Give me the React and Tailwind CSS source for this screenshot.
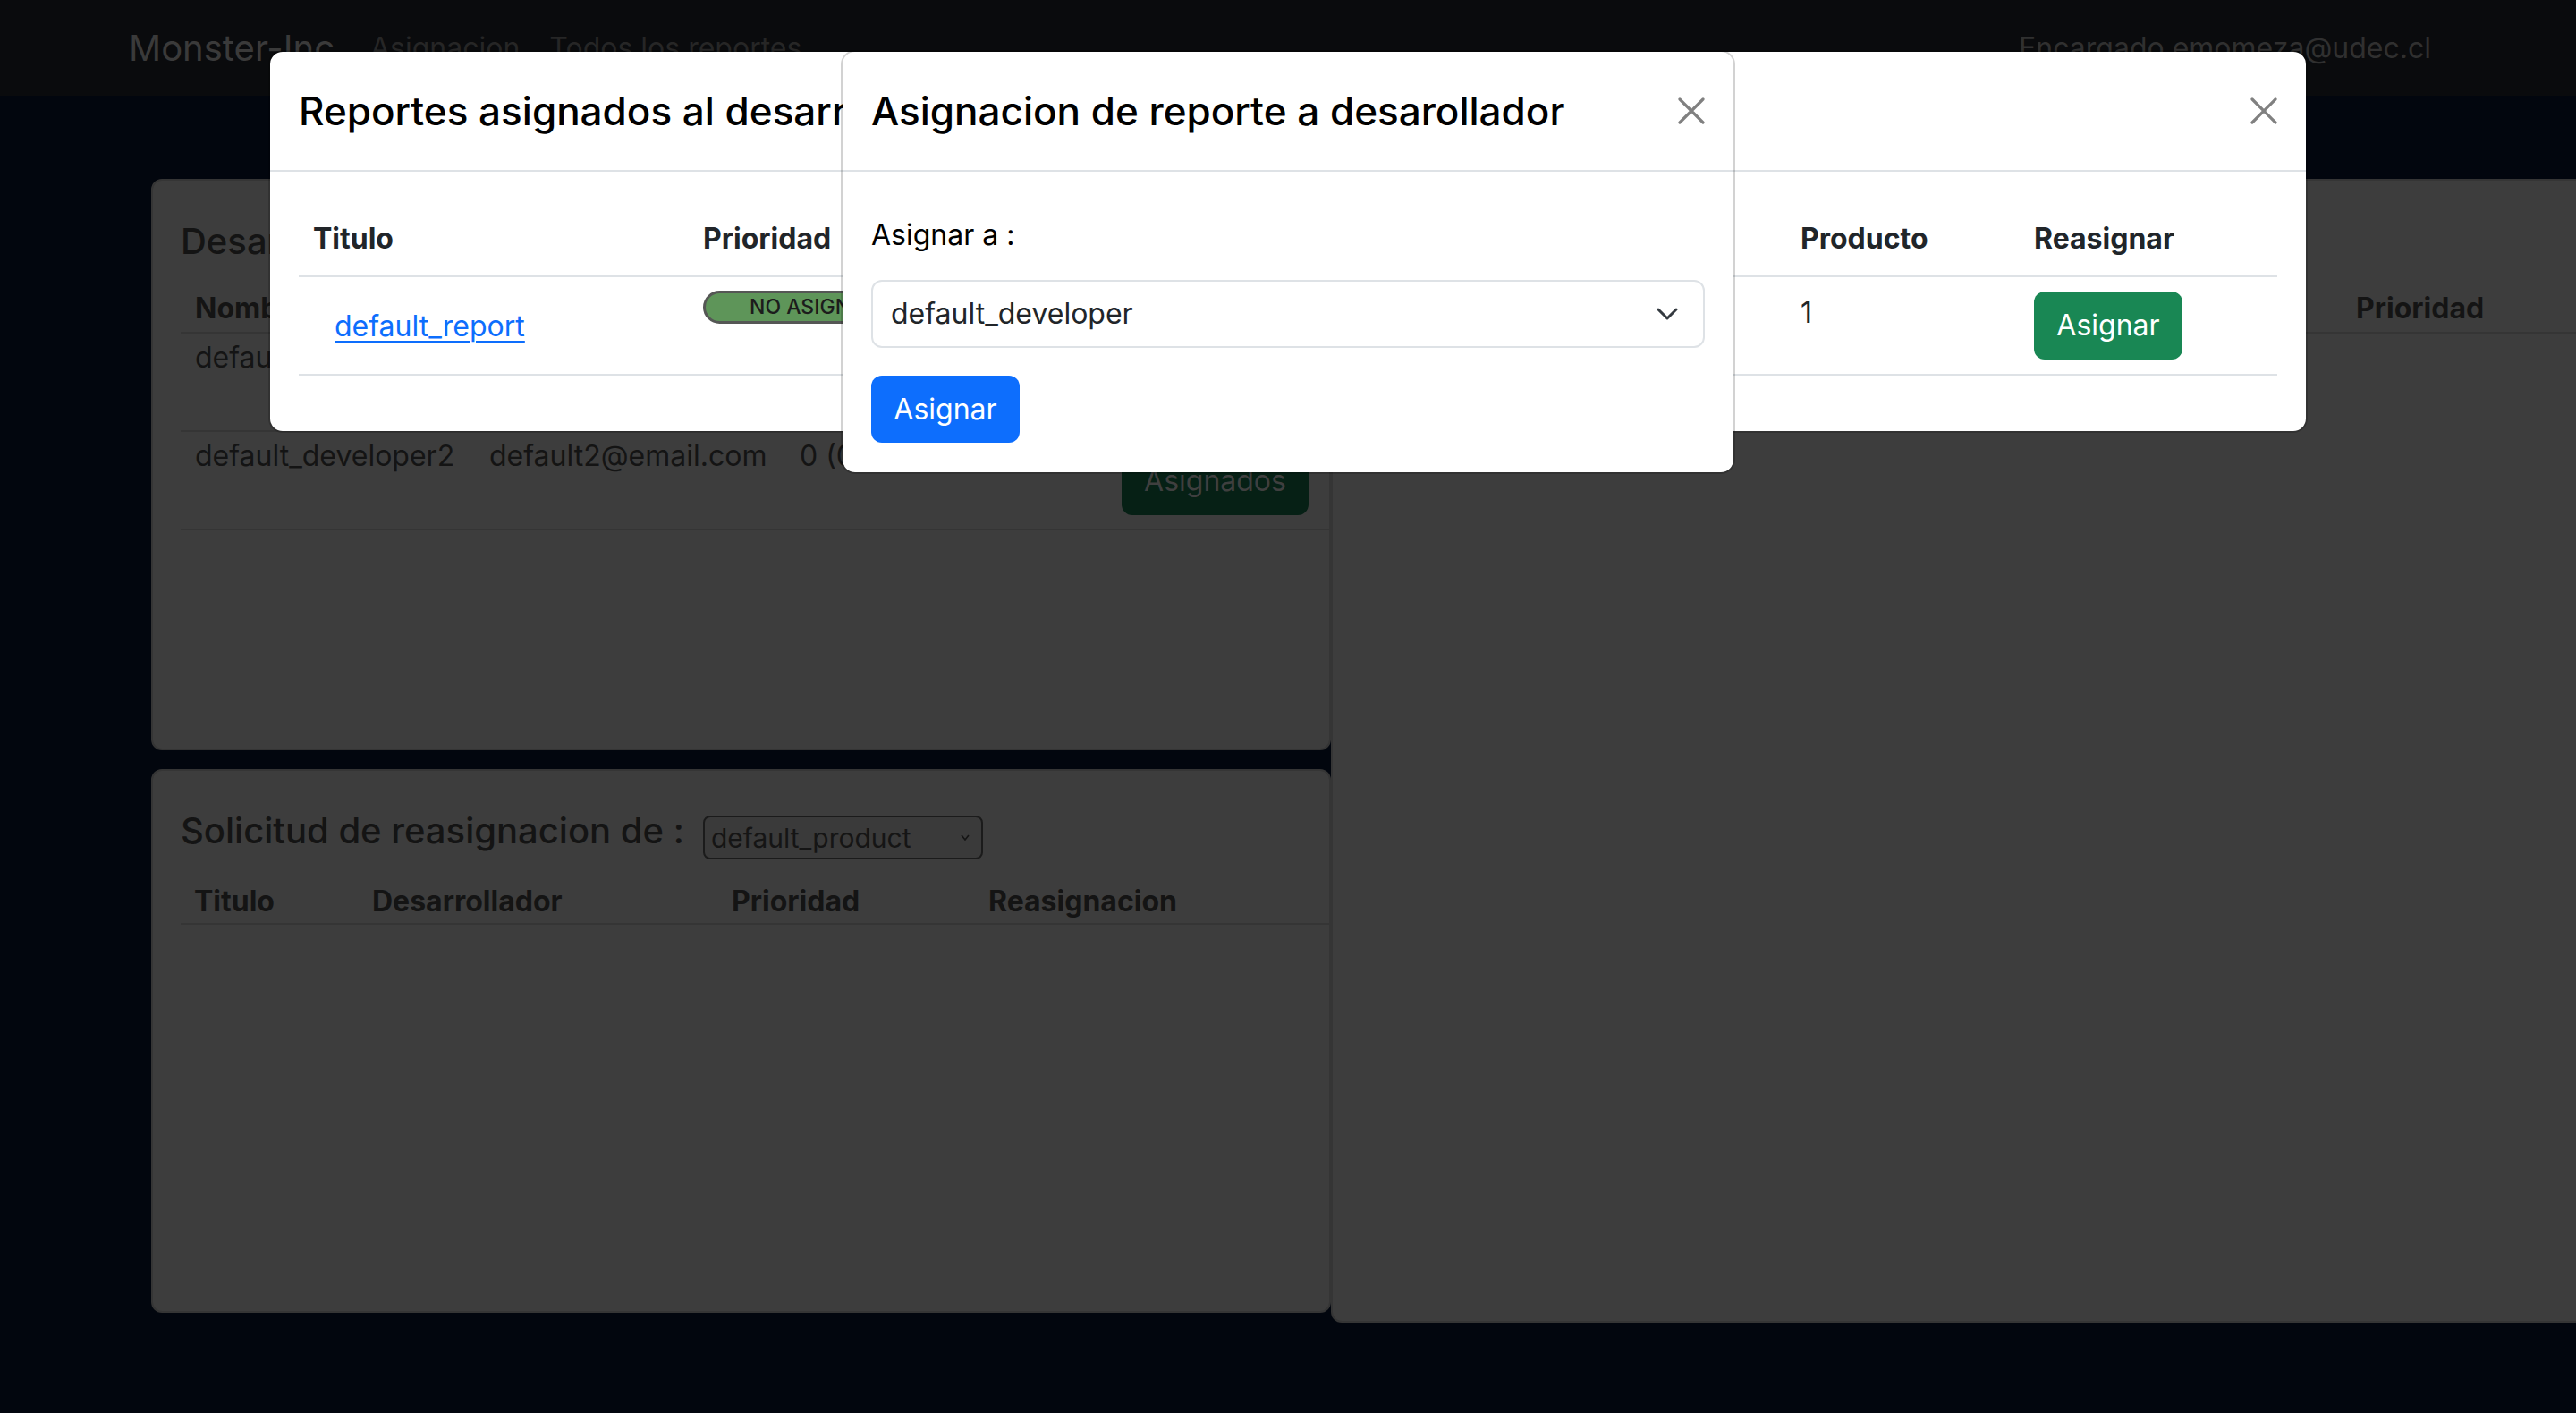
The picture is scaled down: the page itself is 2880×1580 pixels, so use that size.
import React from "react";

function CloseX() {
  return (
    <svg width="30" height="30" viewBox="0 0 30 30" className="shrink-0">
      <path d="M2 2 L28 28 M28 2 L2 28" stroke="#808080" strokeWidth="3.2" strokeLinecap="round" />
    </svg>
  );
}

function Card1() {
  return (
    <div className="h-[639px] shrink-0 rounded-[12px] border-2 border-[#353535] bg-[#3d3d3d] pt-[44px] pl-[31px] text-[#141414]">
      <div className="text-[40px] leading-[48px] font-medium">Desarrolladores</div>
      <div className="mt-[27px] flex border-b-2 border-[#353535] pb-[2px] text-[32px] leading-[48px] font-bold">
        <div className="w-[329px] shrink-0 pl-[16px]">Nombre</div>
        <div className="w-[347px] shrink-0 pl-[16px]"></div>
        <div className="w-[360px] shrink-0 pl-[16px]"></div>
        <div className="flex-1 pl-[16px]"></div>
      </div>
      {[
        ["default_developer", "", ""],
        ["default_developer2", "default2@email.com", "0 (0 activos)"],
      ].map((r) => (
        <div key={r[0]} className="flex h-[110px] border-b-2 border-[#353535] text-[32px] leading-[48px]">
          <div className="w-[329px] shrink-0 pl-[16px] pt-[3px]">{r[0]}</div>
          <div className="w-[347px] shrink-0 pl-[16px] pt-[3px]">{r[1]}</div>
          <div className="w-[360px] shrink-0 pl-[16px] pt-[3px]">{r[2]}</div>
          <div className="flex-1 pl-[16px] pt-[17px]">
            <div className="flex h-[76px] w-[209px] items-center justify-center rounded-[12px] bg-[#062015] text-[#3f3f3f]">
              Asignados
            </div>
          </div>
        </div>
      ))}
    </div>
  );
}

function Card3() {
  return (
    <div className="h-[608px] shrink-0 rounded-[12px] border-2 border-[#353535] bg-[#3d3d3d] pt-[43px] pl-[31px] text-[#141414]">
      <div className="flex items-start">
        <div className="w-[584px] shrink-0 whitespace-nowrap text-[40px] leading-[48px] font-medium">Solicitud de reasignacion de :</div>
        <div className="mt-[7px] flex h-[49px] w-[313px] items-center justify-between rounded-[8px] border-2 border-[#1b1b1b] bg-[#3a3a3a] pl-[7px] pr-[13px] text-[30px] text-[#151515]">
          <span className="leading-none">default_product</span>
          <svg width="10" height="7" viewBox="0 0 10 7">
            <path d="M1 1 L5 6 L9 1" stroke="#151515" strokeWidth="1.6" fill="none" />
          </svg>
        </div>
      </div>
      <div className="mt-[23px] flex border-b-2 border-[#353535] text-[32px] leading-[48px] font-bold">
        <div className="w-[198px] shrink-0 pl-[15px]">Titulo</div>
        <div className="w-[402px] shrink-0 pl-[16px]">Desarrollador</div>
        <div className="w-[287px] shrink-0 pl-[16px]">Prioridad</div>
        <div className="flex-1 pl-[16px]">Reasignacion</div>
      </div>
    </div>
  );
}

function Card2() {
  return (
    <div className="h-[1279px] w-[1800px] shrink-0 rounded-[12px] border-2 border-[#353535] bg-[#3d3d3d] pt-[44px] pl-[32px] text-[#141414]">
      <div className="h-[48px]"></div>
      <div className="mt-[27px] flex border-b-2 border-[#353535] pb-[2px] text-[32px] leading-[48px] font-bold">
        <div className="w-[1096px] shrink-0"></div>
        <div className="w-[420px] shrink-0 pl-[16px]">Prioridad</div>
        <div className="flex-1"></div>
      </div>
    </div>
  );
}

function Modal1() {
  return (
    <div className="absolute left-[300px] top-[56px] w-[2280px] rounded-[16px] border-2 border-black/[0.175] bg-white bg-clip-padding text-[#212529]">
      <div className="flex h-[134px] items-center justify-between border-b-2 border-[#dee2e6] pl-[32px] pr-[32px]">
        <div className="whitespace-nowrap text-[44px] font-medium text-black">Reportes asignados al desarrollador</div>
        <CloseX />
      </div>
      <div className="px-[32px] pt-[32px] pb-[30px]">
        <div className="mb-[32px]">
          <div className="flex border-b-2 border-[#dee2e6] pt-[19px] pb-[17px] text-[32px] leading-[48px] font-bold">
            <div className="w-[436px] shrink-0 pl-[16px]">Titulo</div>
            <div className="w-[430px] shrink-0 pl-[16px]">Prioridad</div>
            <div className="w-[400px] shrink-0 pl-[16px]"></div>
            <div className="w-[397px] shrink-0 pl-[16px]"></div>
            <div className="w-[261px] shrink-0 pl-[16px]">Producto</div>
            <div className="flex-1 pl-[16px]">Reasignar</div>
          </div>
          <div className="flex h-[110px] border-b-2 border-[#dee2e6] text-[32px] leading-[48px]">
            <div className="w-[436px] shrink-0 pl-[16px] pt-[17px]">
              <div className="flex h-[76px] items-center px-[24px] text-[#0d6efd] underline underline-offset-[5px] decoration-2">
                default_report
              </div>
            </div>
            <div className="w-[430px] shrink-0 pl-[16px] pt-[15px]">
              <div className="flex h-[37px] w-[270px] items-center rounded-full border-[3px] border-[#555755] bg-[#5e9559] pl-[49px] text-[23px] font-medium leading-none text-[#1c1c1c]">
                NO ASIGNADO
              </div>
            </div>
            <div className="w-[400px] shrink-0 pl-[16px] pt-[16px]"></div>
            <div className="w-[397px] shrink-0 pl-[16px] pt-[16px]"></div>
            <div className="w-[261px] shrink-0 pl-[16px] pt-[16px]">1</div>
            <div className="flex-1 pl-[16px] pt-[16px]">
              <div className="flex h-[76px] w-[166px] items-center justify-center rounded-[12px] bg-[#198754] text-white">
                Asignar
              </div>
            </div>
          </div>
        </div>
      </div>
    </div>
  );
}

function Modal2() {
  return (
    <div className="absolute left-[940px] top-[56px] w-[1000px] rounded-[16px] border-2 border-black/[0.175] bg-white bg-clip-padding text-[#212529]">
      <div className="flex h-[134px] items-center justify-between border-b-2 border-[#dee2e6] pl-[32px] pr-[32px]">
        <div className="whitespace-nowrap text-[44px] font-medium text-black">Asignacion de reporte a desarollador</div>
        <CloseX />
      </div>
      <div className="px-[32px] pt-[47px] pb-[33px]">
        <div className="text-[32px] leading-[48px] text-black">Asignar a :</div>
        <div className="mt-[26px] flex h-[76px] items-center justify-between rounded-[12px] border-2 border-[#dee2e6] pl-[20px] pr-[28px] text-[32px]">
          <span>default_developer</span>
          <svg width="24" height="14" viewBox="0 0 24 14">
            <path d="M2 2 L12 12 L22 2" stroke="#343a40" strokeWidth="3" fill="none" strokeLinecap="round" strokeLinejoin="round" />
          </svg>
        </div>
        <div className="mt-[31px] flex h-[75px] w-[166px] items-center justify-center rounded-[12px] bg-[#0d6efd] text-[32px] text-white">
          Asignar
        </div>
      </div>
    </div>
  );
}

export default function App() {
  return (
    <div className="relative h-[1580px] w-[2880px] overflow-hidden bg-[#02060e] font-['Inter','Noto_Sans',sans-serif]">
      <nav className="flex h-[107px] items-center bg-[#0a0b0d] pl-[144px] pr-[162px]">
        <span className="text-[40px] leading-none text-[#3a3a3a]">Monster-Inc</span>
        <div className="ml-[40px] flex gap-[33px] text-[32px] leading-none text-[#262626]">
          <span>Asignacion</span>
          <span>Todos los reportes</span>
        </div>
        <span className="ml-auto text-[32px] leading-none text-[#303030]">Encargado emomeza@udec.cl</span>
      </nav>
      <div className="flex pt-[93px] pl-[169px]">
        <div className="flex w-[1319px] shrink-0 flex-col gap-[21px]">
          <Card1 />
          <Card3 />
        </div>
        <Card2 />
      </div>
      <Modal1 />
      <Modal2 />
    </div>
  );
}
